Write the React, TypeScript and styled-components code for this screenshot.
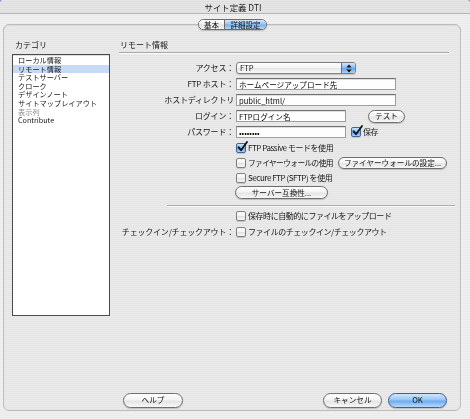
import React from "react";
import styled, { createGlobalStyle } from "styled-components";

const FONT = `"Noto Sans CJK JP", "Liberation Sans", sans-serif`;

const Global = createGlobalStyle`
  html, body { margin: 0; padding: 0; background: #7e9ed2; }
  body { width: 470px; height: 419px; overflow: hidden; font-family: ${FONT}; }
  * { box-sizing: border-box; }
`;

const Window = styled.div`
  width: 470px;
  height: 419px;
  border-radius: 4px 4px 0 0;
  overflow: hidden;
  display: flex;
  flex-direction: column;
  will-change: transform;
  background: repeating-linear-gradient(180deg, #f1f1f1 0px, #f1f1f1 1px, #eaeaea 1px, #eaeaea 2px);
  color: #161616;
`;

const TitleBar = styled.div`
  flex: none;
  height: 14px;
  display: flex;
  align-items: center;
  justify-content: center;
  font-size: 8.4px;
  padding-right: 4px;
  color: #1a1a1a;
  border-bottom: 1px solid #b2b2b2;
  background: repeating-linear-gradient(180deg, #e6e6e6 0px, #e6e6e6 1px, #dedede 1px, #dedede 2px);
`;

const Tabs = styled.div`
  flex: none;
  align-self: flex-start;
  margin: 5px 0 0 198px;
  height: 11px;
  display: flex;
  position: relative;
  z-index: 1;
  border: 1px solid #6a6a6a;
  border-radius: 6px;
  overflow: hidden;
  box-shadow: 0 1px 1px rgba(0, 0, 0, 0.2);
`;

const Tab = styled.div<{ $w: number; $on?: boolean }>`
  width: ${(p) => p.$w}px;
  display: flex;
  align-items: center;
  justify-content: center;
  font-size: 7.5px;
  line-height: 9px;
  color: #111;
  & + & { border-left: 1px solid #6a6a6a; }
  background: ${(p) =>
    p.$on
      ? "linear-gradient(180deg, #d4e8fd 0%, #9ac6f3 45%, #78b1ee 55%, #b2d7fa 100%)"
      : "linear-gradient(180deg, #ffffff 0%, #f1f1f1 45%, #e2e2e2 55%, #f6f6f6 100%)"};
`;

const Group = styled.div`
  flex: 1;
  margin: -6px 9px 8px 3px;
  border: 1px solid #bdbdbd;
  border-radius: 6px;
  background: rgba(0, 0, 0, 0.022);
  box-shadow: inset 0 1px 1px rgba(0, 0, 0, 0.06);
  padding: 15px 11px 2px 8px;
  display: flex;
  flex-direction: column;
`;

const Main = styled.div`
  flex: 1;
  display: flex;
  gap: 9px;
`;

const LeftPane = styled.div`
  width: 98px;
  flex: none;
  display: flex;
  flex-direction: column;
`;

const PaneTitle = styled.div`
  height: 10px;
  line-height: 10px;
  font-size: 8px;
  padding-left: 3px;
  margin-bottom: 4px;
`;

const List = styled.ul`
  margin: 0;
  padding: 1px 0 0;
  list-style: none;
  height: 262px;
  background: #fff;
  border: 1px solid #4c4c4c;
  box-shadow: inset 0 1px 1px rgba(0, 0, 0, 0.15);
`;

const ListItem = styled.li<{ $sel?: boolean; $dim?: boolean }>`
  height: 8.6px;
  line-height: 8.6px;
  font-size: 7.2px;
  padding-left: 5px;
  white-space: nowrap;
  color: ${(p) => (p.$dim ? "#8a8a8a" : "#161616")};
  background: ${(p) => (p.$sel ? "#c6daf6" : "transparent")};
`;

const RightPane = styled.div`
  flex: 1;
  display: flex;
  flex-direction: column;
`;

const SectionHeader = styled.div`
  height: 13px;
  line-height: 10px;
  font-size: 8px;
  padding-left: 1px;
  border-bottom: 1px solid #a9a9a9;
  box-shadow: 0 1px 0 #fbfbfb;
`;

const Form = styled.div`
  margin-top: 7px;
  display: grid;
  grid-template-columns: 115px 1fr;
  column-gap: 2px;
  grid-template-rows: 16px 16px 16px 16px 16px 15px 15px 15px 15px 8px 16px 15px;
`;

const Label = styled.div`
  align-self: center;
  text-align: right;
  white-space: nowrap;
  font-size: 8px;
  line-height: 10px;
  letter-spacing: -0.2px;
`;

const Field = styled.div`
  grid-column: 2;
  display: flex;
  align-items: center;
`;

const Divider = styled.div`
  grid-column: 1 / span 2;
  margin: 5px -6px 1px 48px;
  height: 2px;
  border-top: 1px solid #a9a9a9;
  border-bottom: 1px solid #fbfbfb;
`;

const TextInput = styled.input<{ $w: number }>`
  width: ${(p) => p.$w}px;
  height: 12px;
  margin: 0;
  padding: 0 2px;
  font-family: ${FONT};
  font-size: 7.6px;
  line-height: 10px;
  color: #000;
  background: #fff;
  border: 1px solid #9c9c9c;
  border-top-color: #727272;
  border-radius: 0;
  box-shadow: inset 0 1px 1px rgba(0, 0, 0, 0.14);
  outline: none;
`;

const SelectBox = styled.div`
  width: 120px;
  height: 12px;
  display: flex;
  border: 1px solid #7e7e7e;
  border-radius: 3px;
  overflow: hidden;
  background: linear-gradient(180deg, #ffffff 0%, #f3f3f3 50%, #e6e6e6 55%, #fafafa 100%);
  box-shadow: 0 1px 1px rgba(0, 0, 0, 0.15);
`;

const SelectText = styled.div`
  flex: 1;
  font-size: 7.6px;
  line-height: 10px;
  padding-left: 3px;
`;

const SelectArrow = styled.div`
  width: 14px;
  display: flex;
  align-items: center;
  justify-content: center;
  border-left: 1px solid #4d73a8;
  background: linear-gradient(180deg, #cfe5fc 0%, #8fbff2 45%, #6aa6ec 55%, #a6d0f8 100%);
`;

const PillButton = styled.button<{ $w: number; $h?: number; $default?: boolean; $ml?: number }>`
  width: ${(p) => p.$w}px;
  height: ${(p) => p.$h ?? 13}px;
  flex: none;
  margin: 0 0 0 ${(p) => p.$ml ?? 0}px;
  padding: 0;
  font-family: ${FONT};
  font-size: 7.6px;
  line-height: 10px;
  color: #111;
  border: 1px solid ${(p) => (p.$default ? "#3f5f91" : "#6e6e6e")};
  border-radius: 8px;
  background: ${(p) =>
    p.$default
      ? "linear-gradient(180deg, #d2e7fd 0%, #97c5f4 45%, #6eabef 55%, #b6dafb 100%)"
      : "linear-gradient(180deg, #ffffff 0%, #f4f4f4 45%, #e4e4e4 55%, #f8f8f8 100%)"};
  box-shadow: 0 1px 1px rgba(0, 0, 0, 0.18);
  white-space: nowrap;
`;

const CheckRow = styled.label<{ $ml?: number; $w?: number; $tight?: boolean }>`
  display: flex;
  align-items: center;
  gap: 2px;
  margin-left: ${(p) => p.$ml ?? 0}px;
  ${(p) => (p.$w ? `width: ${p.$w}px;` : "")}
  flex: none;
  font-size: ${(p) => (p.$tight ? 7.7 : 8)}px;
  line-height: 10px;
  white-space: nowrap;
  letter-spacing: ${(p) => (p.$tight ? -0.6 : -0.45)}px;
`;

const Box = styled.span<{ $on?: boolean }>`
  position: relative;
  width: 10px;
  height: 10px;
  flex: none;
  border: 1px solid ${(p) => (p.$on ? "#40659a" : "#7f7f7f")};
  border-radius: 2px;
  background: ${(p) =>
    p.$on
      ? "linear-gradient(180deg, #cde4fc 0%, #8ebff3 45%, #63a2ec 55%, #a8d2f9 100%)"
      : "linear-gradient(180deg, #ffffff 0%, #f2f2f2 50%, #e3e3e3 55%, #f7f7f7 100%)"};
  box-shadow: 0 1px 1px rgba(0, 0, 0, 0.15);
`;

const Tick = styled.svg`
  position: absolute;
  left: 0px;
  top: -3px;
  width: 11px;
  height: 11px;
`;

const Footer = styled.div`
  flex: none;
  height: 16px;
  display: flex;
  align-items: center;
  padding: 0 2px 0 111px;
  gap: 6px;
`;

const Spacer = styled.div`
  flex: 1;
`;

function Check({
  on,
  ml,
  w,
  tight,
  children,
}: {
  on?: boolean;
  ml?: number;
  w?: number;
  tight?: boolean;
  children: React.ReactNode;
}) {
  return (
    <CheckRow $ml={ml} $w={w} $tight={tight}>
      <Box $on={on}>
        {on && (
          <Tick viewBox="0 0 11 11">
            <path
              d="M1.5 6.2 L4 9.2 L10 1"
              fill="none"
              stroke="#111"
              strokeWidth="1.8"
              strokeLinecap="round"
              strokeLinejoin="round"
            />
          </Tick>
        )}
      </Box>
      <span>{children}</span>
    </CheckRow>
  );
}

const categories: { name: string; sel?: boolean; dim?: boolean }[] = [
  { name: "ローカル情報" },
  { name: "リモート情報", sel: true },
  { name: "テストサーバー" },
  { name: "クローク" },
  { name: "デザインノート" },
  { name: "サイトマップレイアウト" },
  { name: "表示列", dim: true },
  { name: "Contribute" },
];

export default function App() {
  return (
    <>
      <Global />
      <Window>
        <TitleBar>サイト定義 DTI</TitleBar>
        <Tabs>
          <Tab $w={25}>基本</Tab>
          <Tab $w={42} $on>
            詳細設定
          </Tab>
        </Tabs>
        <Group>
          <Main>
            <LeftPane>
              <PaneTitle>カテゴリ</PaneTitle>
              <List>
                {categories.map((c) => (
                  <ListItem key={c.name} $sel={c.sel} $dim={c.dim}>
                    {c.name}
                  </ListItem>
                ))}
              </List>
            </LeftPane>
            <RightPane>
              <SectionHeader>リモート情報</SectionHeader>
              <Form>
                <Label>アクセス：</Label>
                <Field>
                  <SelectBox>
                    <SelectText>FTP</SelectText>
                    <SelectArrow>
                      <svg width="6" height="9" viewBox="0 0 6 9">
                        <path d="M3 0.5 L5.6 3.6 L0.4 3.6 Z" fill="#111" />
                        <path d="M3 8.5 L5.6 5.4 L0.4 5.4 Z" fill="#111" />
                      </svg>
                    </SelectArrow>
                  </SelectBox>
                </Field>

                <Label>FTP ホスト：</Label>
                <Field>
                  <TextInput $w={160} readOnly value="ホームページアップロード先" />
                </Field>

                <Label>ホストディレクトリ</Label>
                <Field>
                  <TextInput $w={160} readOnly value="public_html/" />
                </Field>

                <Label>ログイン：</Label>
                <Field>
                  <TextInput $w={110} readOnly value="FTPログイン名" />
                  <PillButton $w={37} $ml={22}>
                    テスト
                  </PillButton>
                </Field>

                <Label>パスワード：</Label>
                <Field>
                  <TextInput $w={110} type="password" readOnly value="********" />
                  <Check on ml={5}>
                    保存
                  </Check>
                </Field>

                <Field>
                  <Check on>FTP Passive モードを使用</Check>
                </Field>

                <Field>
                  <Check w={101} tight>
                    ファイヤーウォールの使用
                  </Check>
                  <PillButton $w={109} $h={12} $ml={1}>
                    ファイヤーウォールの設定...
                  </PillButton>
                </Field>

                <Field>
                  <Check>Secure FTP (SFTP) を使用</Check>
                </Field>

                <Field>
                  <PillButton $w={93} $ml={-1}>
                    サーバー互換性...
                  </PillButton>
                </Field>

                <Divider />

                <Field>
                  <Check>保存時に自動的にファイルをアップロード</Check>
                </Field>

                <Label>チェックイン/チェックアウト：</Label>
                <Field>
                  <Check>ファイルのチェックイン/チェックアウト</Check>
                </Field>
              </Form>
            </RightPane>
          </Main>
          <Footer>
            <PillButton $w={60} $h={15}>
              ヘルプ
            </PillButton>
            <Spacer />
            <PillButton $w={59} $h={15}>
              キャンセル
            </PillButton>
            <PillButton $w={59} $h={15} $default>
              OK
            </PillButton>
          </Footer>
        </Group>
      </Window>
    </>
  );
}
